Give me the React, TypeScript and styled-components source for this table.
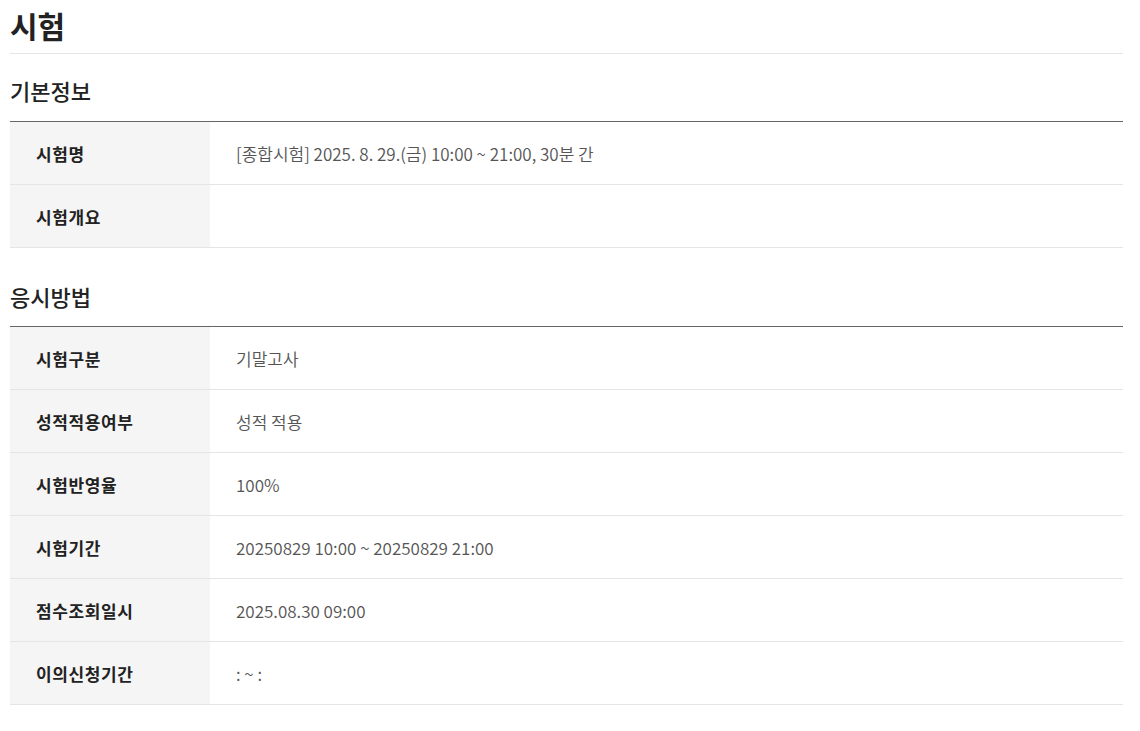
import React from "react";
import styled, { createGlobalStyle } from "styled-components";

const Global = createGlobalStyle`
  html, body { margin: 0; padding: 0; background: #fff; }
  body { font-family: "Noto Sans CJK KR", "Noto Sans", sans-serif; color: #222; }
`;

const Page = styled.div`
  width: 1113px;
  padding-left: 10px;
`;

const Title = styled.h1`
  margin: 0;
  padding-top: 5px;
  padding-bottom: 8px;
  font-size: 30px;
  line-height: 40px;
  font-weight: 700;
  color: #222;
  border-bottom: 1px solid #e5e5e5;
`;

const SectionTitle = styled.h2<{ $top: number; $bottom: number }>`
  margin: ${(p) => p.$top}px 0 ${(p) => p.$bottom}px;
  font-size: 22px;
  line-height: 32px;
  font-weight: 500;
  color: #222;
`;

const Table = styled.div`
  border-top: 1px solid #666;
`;

const Row = styled.div`
  display: grid;
  grid-template-columns: 200px 1fr;
  height: 62px;
  border-bottom: 1px solid #e5e5e5;
`;

const Label = styled.div`
  display: flex;
  align-items: center;
  padding-left: 26px;
  background: #f5f5f5;
  font-size: 17px;
  font-weight: 700;
  letter-spacing: 0.6px;
  color: #222;
`;

const Value = styled.div`
  display: flex;
  align-items: center;
  padding-left: 26px;
  font-size: 17px;
  font-weight: 350;
  color: #555;
`;

const basic = [
  ["시험명", "[종합시험] 2025. 8. 29.(금) 10:00 ~ 21:00, 30분 간"],
  ["시험개요", ""],
];

const method = [
  ["시험구분", "기말고사"],
  ["성적적용여부", "성적 적용"],
  ["시험반영율", "100%"],
  ["시험기간", "20250829 10:00 ~ 20250829 21:00"],
  ["점수조회일시", "2025.08.30 09:00"],
  ["이의신청기간", ": ~ :"],
];

const InfoTable = ({ rows }: { rows: string[][] }) => (
  <Table>
    {rows.map(([k, v]) => (
      <Row key={k}>
        <Label>{k}</Label>
        <Value>{v}</Value>
      </Row>
    ))}
  </Table>
);

export default function App() {
  return (
    <>
      <Global />
      <Page>
        <Title>시험</Title>
        <SectionTitle $top={20} $bottom={15}>기본정보</SectionTitle>
        <InfoTable rows={basic} />
        <SectionTitle $top={32} $bottom={14}>응시방법</SectionTitle>
        <InfoTable rows={method} />
      </Page>
    </>
  );
}
